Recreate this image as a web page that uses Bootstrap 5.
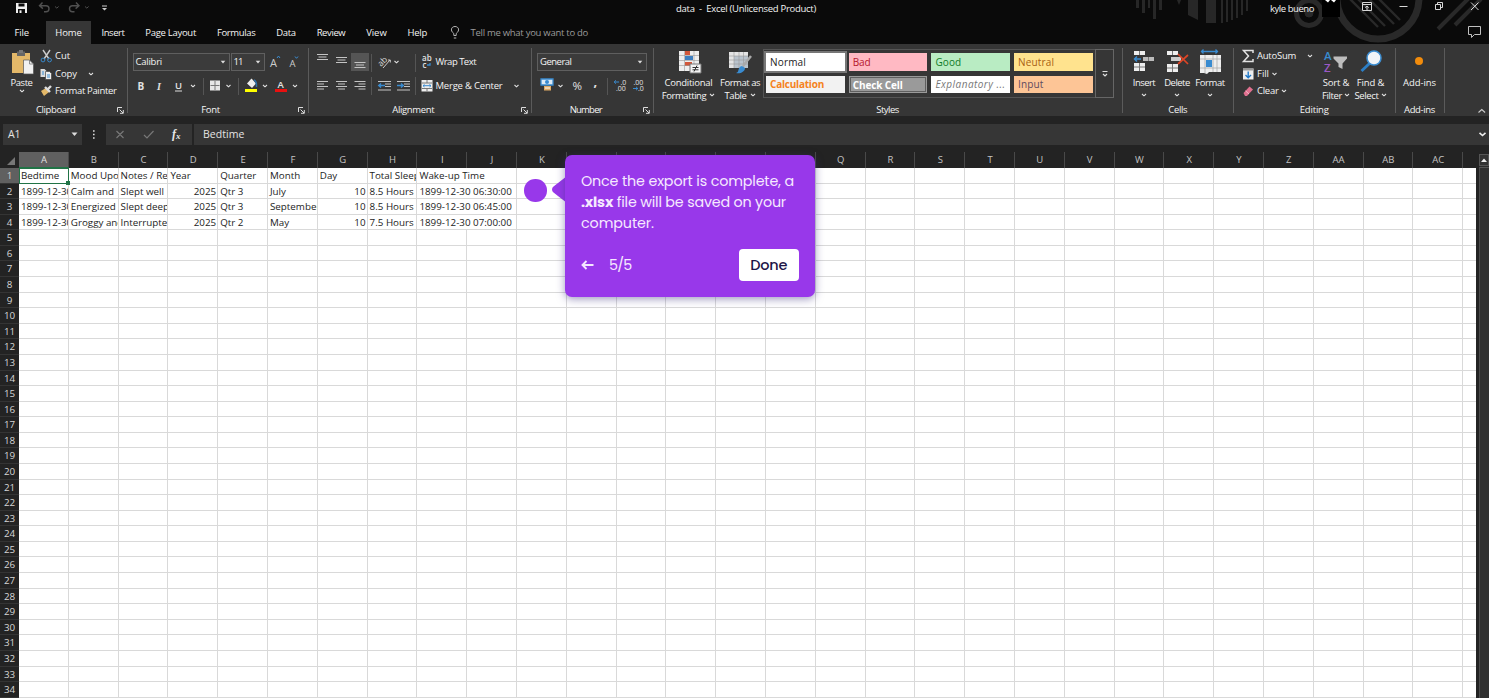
<!DOCTYPE html>
<html lang="en">
<head>
<meta charset="utf-8">
<title>data - Excel</title>
<link rel="stylesheet" href="https://cdn.jsdelivr.net/npm/bootstrap@5.3.0/dist/css/bootstrap.min.css">
<style>
body{font-family:"Open Sans","Noto Sans",sans-serif;font-size:9.5px;line-height:12px;background:#232323;color:#f4f4f4;overflow:hidden;height:698px}
svg{display:block;flex:none;overflow:visible}
svg text{font-family:"Open Sans",sans-serif}
[data-w]{display:inline-block;white-space:nowrap;flex:none}
.titlebar{height:21px;background:#0a0a0a}
.tabsrow{height:23px;background:#0a0a0a}
.tabitem{padding:0 10.45px;height:23px;line-height:23px}
.tabitem.first{padding:0 17px 0 14.5px}
.tabitem.current{background:#363636;padding:0 9.3px}
.deco{position:absolute;right:0;top:0;z-index:1}
.above{position:relative;z-index:2}
.caption{padding-left:571px;line-height:17px}
.user{margin-left:454px;line-height:17px}
.tell{color:#9a9a9a;margin-left:9px}
.ribbon{height:72px;background:#363636}
.grp{height:65px;margin-top:4px;position:relative;border-right:1px solid #5b5b5b}
.grpname{height:12px;line-height:12px;position:absolute;left:0;right:0;bottom:-3px}
.launch{position:absolute;right:3px;bottom:-1px}
.grpbody{height:53px;margin-top:-1px}
.r17{height:17.8px}
.r24{height:25px}
.r24.second{margin-top:1px}
.g1{width:127.5px}.g2{width:181px}.g3{width:223.5px}.g4{width:121.5px}.g5{width:469px}.g6{width:111.5px}.g7{width:161.5px}.g8{width:49px}
.big{line-height:13px}
.big .cap{height:13px}
.big svg.ic{margin:2.5px 0 1px}
.paste{width:39px;padding-left:4px}
.box1{border:1px solid #5f5f5f;background:#3b3b3b;height:18px;padding:0 3px 0 2px}
.fontbox{width:97px}.sizebox{width:34px;margin-left:1px}.numbox{width:110px;margin-left:5px}
.gallery{border:1px solid #555;width:333px;height:49px;margin-top:2px;padding:3px 3px 3px 2px;display:grid;grid-template-columns:repeat(4,78.5px);column-gap:4.2px;row-gap:5px;grid-template-rows:18px 17px}
.swatch{padding-left:4px;font-size:10px;line-height:18px;color:#222;overflow:hidden;font-family:"Open Sans"}
.swatch.low{line-height:16px}
.normal{background:#fff;outline:2px solid #777}
.bad{background:#ffb9c3;color:#b5172c}.good{background:#b9ecc3;color:#107b28}.neutral{background:#ffe38e;color:#a85f12}
.calc{background:#f2f2f2;color:#f58220;font-weight:700}.check{background:#9a9a9a;color:#fff;font-weight:700;border:1px solid #9a9a9a;outline:1px solid #5f5f5f;outline-offset:-2px;line-height:14px;padding-left:3px}
.expl{background:#fff;color:#777;font-style:italic}.inputs{background:#fdc596;color:#5e4a60}
.gallmore{border:1px solid #666;width:19px;height:49px;margin-top:2px}
.fbar{height:21px;margin-top:8px;font-size:10.5px;color:#e4e4e4}
.fbar>div{background:#363636;height:21px;line-height:21px}
.namebox{width:79px;margin-left:3px;padding:0 4px 0 5px}
.fxbox{width:86px;margin-left:24px;position:relative}
.sheet{margin-top:7px;height:546px}
.gridarea{width:1476px;overflow:hidden;background:#fff;flex:none}
.line{display:flex;height:15.58px}
.heads{height:16px;background:#232323;color:#c4c4c4;font-size:9.5px;line-height:16px}
.corner{width:19px;flex:none;padding:4px 3px 2px 7px}
.hd{width:49.81px;flex:none;text-align:center;border-right:1px solid #494949;padding-left:1px}
.hd.on{background:#606060;color:#e2e2e2;border-bottom:1px solid #217346}
.num{width:19px;flex:none;background:#232323;color:#d6d6d6;text-align:center;font-size:9.8px;line-height:16px;border-bottom:1px solid #343434}
.num.on{background:#606060}
.cel{width:49.81px;flex:none;border-right:1px solid #d9d9d9;border-bottom:1px solid #d9d9d9;color:#1c1c1c;font-size:9.8px;line-height:16px;white-space:nowrap;overflow:hidden;padding:0 1px 0 2px}
.cel.two{width:99.62px}
.cel.rt{text-align:right}
.picked{position:relative;outline:1.5px solid #217346;outline-offset:-1px;z-index:1;overflow:visible}
.picked::after{content:"";position:absolute;right:-2px;bottom:-2px;width:4px;height:4px;background:#217346}
.scroller{width:10px;margin-left:3px;background:#2c2c2c;margin-top:2px}
.scroller .upbox{height:12px;border:1px solid #555;background:#333}
.scroller .track{height:532px;border-left:1px solid #4b4b4b;border-top:1px solid #555;margin-top:1px;background:#303030}
.tour{position:absolute;left:524px;top:155px;z-index:3;font-family:"Poppins","Inter",sans-serif}
.tourdot{width:22.5px;height:22.5px;border-radius:50%;background:#9838ea;margin-top:24px}
.tourbox{width:250px;height:142px;border-radius:7px;background:#9838ea;color:#f6e9ff;padding:16px;font-size:14.3px;line-height:21px;box-shadow:0 2px 9px rgba(60,50,130,.5)}
.donebtn{width:60.5px;height:32px;background:#fff;border-radius:4px;color:#1d1547;line-height:32px;font-size:14.5px;font-weight:500}
</style>
</head>
<body>
<svg width="0" height="0" class="position-absolute"><defs>
<symbol id="chev" viewBox="0 0 6 4"><path d="M1 1l2 1.8L5 1" fill="none" stroke="#e0e0e0" stroke-width="1.1"/></symbol>
<symbol id="tri" viewBox="0 0 6 4"><path d="M.7.8h4.6L3 3.4z" fill="#ddd"/></symbol>
<symbol id="lau" viewBox="0 0 7 7"><path d="M.5 5V.5H5M2.5 2.5L6 6M6.3 3v3.3H3" fill="none" stroke="#ddd" stroke-width="1"/></symbol>
</defs></svg>

<svg class="deco" width="360" height="44"><g fill="#272727">
<path d="M7 0h3v8H7zM13 0h3v13h-3zM19 0h2v8h-2zM24 0h3v19h-3zM30 0h3v10h-3zM48 0h4l-2 5zM59 0h10v20l-10-5zM77 0h10v23H77zM92 0h2v23h-2zM97 0h2v22h-2zM102 0h2v20h-2zM107 0h2v18h-2zM112 0h2v15h-2zM117 0h2v11h-2z"/></g>
<g fill="none" stroke="#292929"><circle cx="180" cy="13" r="12.500" stroke-width="5"/><circle cx="180" cy="13" r="4" fill="#292929"/><circle cx="249" cy="-2" r="41" stroke-width="7"/><path d="M220-2l29 29M228-2l28 28M237-4l28 28M246-5l25 25" stroke-width="2.400"/><path d="M309 29L342-4M326 25L352-1" stroke-width="4"/></g></svg>

<div class="titlebar d-flex">
 <svg width="105" height="21"><path d="M16 3h11v10H16z" fill="#eee"/><path d="M18.500 3.500h6v3h-6zM18 9h7v4h-7z" fill="#0a0a0a"/><path d="M19.500 10.300h2V13h-2z" fill="#eee"/>
 <g fill="none" stroke="#505050" stroke-width="1.400"><path d="M42.500 2.500L39.500 5.700l3.400 2.900M40 5.700h6c4 0 4 6 0 6h-2M76 2.500l3 3.200-3.400 2.900M78.500 5.700h-6c-4 0-4 6 0 6h2"/><path d="M55 6.500l1.800 1.600L58.600 6.500M85 6.500l1.800 1.600L88.600 6.500" stroke-width="1"/></g>
 <path d="M102 5.500h5v1h-5zM102 8h5l-2.500 2.600z" fill="#ccc"/></svg>
 <div class="caption"><span data-w="140">data &nbsp;-&nbsp; Excel (Unlicensed Product)</span></div>
 <div class="user above"><span data-w="44">kyle bueno</span></div>
 <svg width="175" height="21" class="above"><path d="M8 0h18v17H8z" fill="#000"/><path d="M11 0h5l-2 2.500zM17 0h5l-2 2.500z" fill="#fff"/>
 <g fill="none" stroke="#d8d8d8"><path d="M48.500 2.500h9v8h-9zM48.500 4.500h9M53 10V6M51.200 7.600L53 6l1.800 1.600"/><path d="M85.500 6.500h8M121.500 4.500h5v5h-5zM123.500 4V2.500h5v5H127M157 2.500l7.500 7.500M164.500 2.500L157 10"/></g></svg>
</div>

<div class="tabsrow d-flex">
 <div class="tabitem first"><span data-w="14.500">File</span></div>
 <div class="tabitem current"><span data-w="26.500">Home</span></div>
 <div class="tabitem"><span data-w="22.800">Insert</span></div>
 <div class="tabitem"><span data-w="50.800">Page Layout</span></div>
 <div class="tabitem"><span data-w="38.500">Formulas</span></div>
 <div class="tabitem"><span data-w="19.500">Data</span></div>
 <div class="tabitem"><span data-w="28.700">Review</span></div>
 <div class="tabitem"><span data-w="20.500">View</span></div>
 <div class="tabitem"><span data-w="19.500">Help</span></div>
 <svg width="24" height="23"><g fill="none" stroke="#b5b5b5"><path d="M15.800 14.500v-2c-4-3-2.500-7 1.200-7s5.200 4 1.200 7v2zM15.800 17h2.500"/></g></svg>
 <div class="tabitem px-0 tell"><span data-w="117.500">Tell me what you want to do</span></div>
 <svg class="ms-auto above" width="22" height="23"><path d="M1.500 5.500h12v8h-6l-3 3v-3h-3z" fill="none" stroke="#c0c0c0"/></svg>
</div>

<div class="ribbon d-flex above">
 <div class="grp g1 d-flex flex-column">
  <div class="grpbody d-flex">
   <div class="paste big d-flex flex-column align-items-center"><svg class="ic" width="24" height="25"><path d="M2 3h18v20H2z" fill="#e3b869"/><path d="M7 1.500h8V6H7z" fill="#666"/><path d="M9 0h4v3H9z" fill="#777"/><path d="M13.500 10h6l4 4v10h-10z" fill="#f1f1f1" stroke="#555" stroke-width=".7"/><path d="M19.500 10v4h4" fill="none" stroke="#777" stroke-width=".8"/></svg><div class="cap"><span data-w="22">Paste</span></div><svg width="6" height="4"><use href="#chev"/></svg></div>
   <div>
    <div class="r17 d-flex align-items-center"><svg width="16" height="14"><path d="M4 1l6 9M11 1L5 10" stroke="#ccc" stroke-width="1.400"/><circle cx="4" cy="11" r="1.900" fill="none" stroke="#3687c8"/><circle cx="10.500" cy="11" r="1.900" fill="none" stroke="#3687c8"/></svg><span data-w="15">Cut</span></div>
    <div class="r17 d-flex align-items-center"><svg width="16" height="12"><path d="M1.500 1h4l2 2v6h-6z" fill="#ddd"/><path d="M6.500 3.500h4l2 2v6h-6z" fill="#eee" stroke="#444" stroke-width=".7"/><path d="M3 4h2M3 6h2M8 7h3M8 9h3" stroke="#398bd0"/></svg><span data-w="22">Copy</span><svg width="20" height="4"><use href="#chev" x="11" width="6" height="4"/></svg></div>
    <div class="r17 d-flex align-items-center"><svg width="16" height="12"><path d="M2 6l5-3 3 4-5 4z" fill="#e3b869"/><path d="M6 2l5 5M9 4l3-3" stroke="#ddd" stroke-width="2.400"/></svg><span data-w="61.500">Format Painter</span></div>
   </div>
  </div>
  <div class="grpname d-flex justify-content-center" style="padding-right:15px"><span data-w="39.500">Clipboard</span></div>
  <svg class="launch" width="7" height="7"><use href="#lau"/></svg>
 </div>

 <div class="grp g2 d-flex flex-column">
  <div class="grpbody ps-1"><div class="ps-1" style="margin-left:-3px">
   <div class="r24 d-flex align-items-center pt-1"><div class="box1 fontbox d-flex align-items-center justify-content-between"><span data-w="26.500">Calibri</span><svg width="6" height="4"><use href="#tri"/></svg></div><div class="box1 sizebox d-flex align-items-center justify-content-between"><span data-w="9">11</span><svg width="6" height="4"><use href="#tri"/></svg></div>
   <svg width="36" height="14"><g fill="#ccc"><text x="5" y="11.500" font-size="11">A</text><text x="24.500" y="11.500" font-size="9.500">A</text></g><path d="M12 3l1.500-2L15 3M30 1.500l1.500 1.800L33 1.500" fill="none" stroke="#3b8dd2"/></svg></div>
   <svg width="170" height="26" style="margin-top:2px"><g fill="#e2e2e2" font-size="10"><text x="4.500" y="15.500" font-weight="700">B</text><text x="24" y="15.500" font-style="italic" style="font-family:'Liberation Serif'" font-weight="700">I</text><text x="42" y="15" font-size="9.500" font-weight="600">U</text><text x="144.500" y="14" font-size="9.500" font-weight="600">A</text></g>
   <path d="M42 17h7" stroke="#ddd"/><path d="M70.500 4v17M105.500 4v17" stroke="#555"/><path d="M77 6.500h10v10H77z" fill="#e6e6e6"/><path d="M82 7v9M77.500 11.500h9" stroke="#777"/>
   <path d="M114 9.500l4.500-5 4.500 5-4 4.500z" fill="#eee"/><path d="M121 6c2.500 1 2.500 3 2.500 7" fill="none" stroke="#2c6da5" stroke-width="1.500"/><path d="M112 15h12v3h-12z" fill="#ff0"/><path d="M142 15h12v3h-12z" fill="#e81010"/>
   <use href="#chev" x="57" y="10" width="6" height="4"/><use href="#chev" x="92.500" y="10" width="6" height="4"/><use href="#chev" x="129" y="10" width="6" height="4"/><use href="#chev" x="159" y="10" width="6" height="4"/></svg></div>
  </div>
  <div class="grpname text-center" style="padding-right:14px"><span data-w="18.500">Font</span></div>
  <svg class="launch" width="7" height="7"><use href="#lau"/></svg>
 </div>

 <div class="grp g3 d-flex flex-column">
  <div class="grpbody">
   <div class="r24 d-flex align-items-center pt-1"><svg width="127" height="24"><path d="M42 3h18v18H42z" fill="#555"/><path d="M8 4.500h11M9.500 7h8M8 9.500h11M27 7.500h11M28.500 10h8M27 12.500h11M45.500 12.500h11M47 15h8M45.500 17.500h11" stroke="#c4c4c4"/><path d="M62.500 4v18M106.500 4v18" stroke="#555"/><text x="68" y="14.500" font-size="8.500" fill="#ddd" transform="rotate(-45 73 11)">ab</text><path d="M74 18l7-8M79 10h2.300v2.500" fill="none" stroke="#ccc"/><use href="#chev" x="84.500" y="10" width="6" height="4"/><g fill="#e3e3e3" font-size="8" font-weight="600"><text x="113" y="11">ab</text><text x="113.500" y="17.500">c</text></g><path d="M121 13v2h-3" fill="none" stroke="#398bd0" stroke-width="1.300"/></svg><span data-w="40.500">Wrap Text</span></div>
   <div class="r24 second d-flex align-items-center"><svg width="127" height="24"><path d="M8 7.500h11M8 10h7M8 12.500h11M8 15h7M27 7.500h11M29 10h7M27 12.500h11M29 15h7M45.500 7.500h11M49.500 10h7M45.500 12.500h11M49.500 15h7M69 7.500h13M76 10h6M76 12.500h6M69 16h13M88 7.500h13M95 10h6M95 12.500h6M88 16h13" stroke="#c4c4c4"/><path d="M70 11.500h6M72 9.500l-2.200 2 2.200 2M88 11.500h6M92 9.500l2.200 2-2.200 2" stroke="#398bd0" stroke-width="1.500" fill="none"/><path d="M62.500 3v18M106.500 3v18" stroke="#555"/><path d="M112.500 6h11v11.500h-11z" fill="#eee"/><path d="M113 9h10M113 14.500h10M118 6v3M118 14.500v3" stroke="#777"/><path d="M114 11.700h8M115.500 10.500l-1.500 1.200 1.500 1.200M120.500 10.500l1.500 1.200-1.500 1.200" stroke="#398bd0" fill="none"/></svg><span data-w="67">Merge &amp; Center</span><svg width="20" height="4"><use href="#chev" x="10.500" width="6" height="4"/></svg></div>
  </div>
  <div class="grpname text-center" style="padding-right:13px"><span data-w="42">Alignment</span></div>
  <svg class="launch" width="7" height="7"><use href="#lau"/></svg>
 </div>

 <div class="grp g4 d-flex flex-column">
  <div class="grpbody">
   <div class="r24 d-flex align-items-center pt-1"><div class="box1 numbox d-flex align-items-center justify-content-between"><span data-w="31.500">General</span><svg width="6" height="4"><use href="#tri"/></svg></div></div>
   <svg width="118" height="26" style="margin-top:2px"><path d="M9 5h12v6H9z" fill="#dceaf6" stroke="#398bd0" stroke-width="1.300"/><circle cx="15" cy="8" r="2" fill="#398bd0"/><path d="M12 12h7v4.500h-7z" fill="#e0aa64"/><path d="M13 14h5" stroke="#fff"/><use href="#chev" x="25.500" y="10" width="6" height="4"/><g fill="#e2e2e2"><text x="40.500" y="16" font-size="11.500">%</text><text x="61.500" y="12" font-size="13" font-weight="700">,</text><g font-size="7"><text x="88.500" y="10.500">.0</text><text x="84" y="17">.00</text><text x="101.500" y="10.500">.00</text><text x="106" y="17">.0</text></g></g><path d="M75.500 4v17" stroke="#555"/><path d="M82 8h5M84 6.300l-1.800 1.700L84 9.700M101 14.500h5M104 12.800l1.800 1.700-1.800 1.700" stroke="#398bd0" fill="none"/></svg>
  </div>
  <div class="grpname text-center" style="padding-right:13px"><span data-w="32">Number</span></div>
  <svg class="launch" width="7" height="7"><use href="#lau"/></svg>
 </div>

 <div class="grp g5 d-flex flex-column">
  <div class="grpbody d-flex">
   <div class="big d-flex flex-column align-items-center" style="width:70px"><svg class="ic" width="24" height="25"><path d="M2 1h20v20H2z" fill="#eee"/><path d="M8 1h5v4H8zM8 12h7v4H8z" fill="#d2573a"/><path d="M8 6h8v4H8z" fill="#3e7fc0"/><path d="M2 5.500h20M2 10.500h20M2 15.500h20M7.500 1v20M17 1v20" stroke="#999" stroke-width=".6"/><path d="M13 14h11v9H13z" fill="#f4f4f4" stroke="#777"/><path d="M15.500 17.500h6M15.500 19.800h6M20 15.500l-3 6" stroke="#333"/></svg><div class="cap"><span data-w="48">Conditional</span></div><div class="cap d-flex align-items-center"><span data-w="44.500">Formatting</span><svg width="9" height="4"><use href="#chev" x="3" width="6" height="4"/></svg></div></div>
   <div class="big d-flex flex-column align-items-center" style="width:33px"><svg class="ic" width="24" height="25"><path d="M1 2h19v16H1z" fill="#e4e4e4"/><path d="M6 6h14v12H6z" fill="#b9c3cd"/><path d="M1 6h19M1 10h19M1 14h19M6 2v16M11 2v16M15.500 2v16" stroke="#999" stroke-width=".6"/><path d="M23 6l-8 10" stroke="#aaa" stroke-width="2.500"/><path d="M8 23c4-1 1-6 6-7l3 2c0 4-5 6-9 5z" fill="#398bd0"/></svg><div class="cap"><span data-w="40">Format as</span></div><div class="cap d-flex align-items-center"><span data-w="22">Table</span><svg width="9" height="4"><use href="#chev" x="3" width="6" height="4"/></svg></div></div>
   <div class="gallery" style="margin-left:6.500px"><div class="swatch normal"><span data-w="36">Normal</span></div><div class="swatch bad"><span data-w="18">Bad</span></div><div class="swatch good"><span data-w="26">Good</span></div><div class="swatch neutral"><span data-w="36">Neutral</span></div><div class="swatch low calc"><span data-w="54">Calculation</span></div><div class="swatch low check"><span data-w="50">Check Cell</span></div><div class="swatch low expl"><span data-w="70">Explanatory ...</span></div><div class="swatch low inputs"><span data-w="25.500">Input</span></div></div>
   <div class="gallmore d-flex align-items-center justify-content-center" style="margin-left:-1px"><svg width="6" height="6"><path d="M.5.500h5" stroke="#ddd"/><path d="M1 3l2 2 2-2" fill="none" stroke="#ddd" stroke-width="1.200"/></svg></div>
  </div>
  <div class="grpname text-center"><span data-w="22.500">Styles</span></div>
 </div>

 <div class="grp g6 d-flex flex-column">
  <div class="grpbody d-flex" style="padding-left:5px">
   <div class="big d-flex flex-column align-items-center" style="width:33px"><svg class="ic" width="22" height="25"><path d="M1 1h11v4H1zM1 13h11v8H1z" fill="#eee"/><path d="M10 7h11v4H10z" fill="#bbb"/><path d="M1 17h11M6.500 1v4M6.500 13v8M15.500 7v4" stroke="#777"/><path d="M1 9h7M4 6.500L1.500 9 4 11.500" stroke="#398bd0" stroke-width="1.500" fill="none"/></svg><div class="cap"><span data-w="22.500">Insert</span></div><svg width="6" height="4" class="mt-1"><use href="#chev"/></svg></div>
   <div class="big d-flex flex-column align-items-center" style="width:33px"><svg class="ic" width="22" height="25"><path d="M1 1h11v4H1zM1 14h11v8H1z" fill="#eee"/><path d="M5 7h10v4H5z" fill="#ccc"/><path d="M1 18h11M6.500 1v4M6.500 14v8" stroke="#777"/><path d="M12 4l10 10M22 5L12 14" stroke="#dc4526" stroke-width="1.700"/></svg><div class="cap"><span data-w="25.500">Delete</span></div><svg width="6" height="4" class="mt-1"><use href="#chev"/></svg></div>
   <div class="big d-flex flex-column align-items-center" style="width:33px"><svg class="ic" width="22" height="25"><path d="M1 5h21v17H10l-2 2-3-1H1z" fill="#eee"/><path d="M7 10h6v7H7z" fill="#398bd0"/><path d="M1 9h21M1 18h21M6 5v18M14 5v17M18 5v17" stroke="#aaa" stroke-width=".8"/><path d="M2 1.500h17M4.500-.5L2.500 1.500l2 2M16.500-.5l2 2-2 2" stroke="#398bd0" stroke-width="1.300" fill="none"/></svg><div class="cap"><span data-w="29.500">Format</span></div><svg width="6" height="4" class="mt-1"><use href="#chev"/></svg></div>
  </div>
  <div class="grpname text-center"><span data-w="19">Cells</span></div>
 </div>

 <div class="grp g7 d-flex flex-column">
  <div class="grpbody d-flex">
   <div style="width:85px;padding-left:7px">
    <div class="r17 d-flex align-items-center"><svg width="16" height="14"><path d="M12 4V1.500H2.500L7.500 7l-5 5.500H12V10" fill="none" stroke="#e2e2e2" stroke-width="1.500"/></svg><span data-w="39">AutoSum</span><svg width="20" height="4"><use href="#chev" x="11" width="6" height="4"/></svg></div>
    <div class="r17 d-flex align-items-center"><svg width="16" height="12"><path d="M2 .5h10.500v11H2z" fill="#eee"/><path d="M2 .5h10.500v2H2z" fill="#999"/><path d="M7.200 3.500v6M4.500 7l2.700 2.700L10 7" fill="none" stroke="#1f78c8" stroke-width="1.400"/></svg><span data-w="12">Fill</span><svg width="10" height="4"><use href="#chev" x="2.500" width="6" height="4"/></svg></div>
    <div class="r17 d-flex align-items-center"><svg width="16" height="12"><path d="M2.500 8l6-6.500 3.500 3-6 6.500h-2z" fill="#e0708f"/><path d="M4.500 5.800L8 9" stroke="#f2b6c6"/></svg><span data-w="21.500">Clear</span><svg width="10" height="4"><use href="#chev" x="2" width="6" height="4"/></svg></div>
   </div>
   <div class="big d-flex flex-column align-items-center" style="width:34px"><svg class="ic" width="24" height="25"><text x="0" y="10" font-size="11.500" font-weight="600" fill="#398bd0">A</text><text x="0" y="21.500" font-size="11.500" font-weight="600" fill="#9b59c6">Z</text><path d="M9.500 6.500H23v2l-4.500 5V19l-4-2v-3.500l-5-5z" fill="#bdbdbd"/></svg><div class="cap"><span data-w="26.500">Sort &amp;</span></div><div class="cap d-flex align-items-center"><span data-w="20">Filter</span><svg width="8" height="4"><use href="#chev" x="2" width="6" height="4"/></svg></div></div>
   <div class="big d-flex flex-column align-items-center" style="width:35px"><svg class="ic" width="24" height="25"><path d="M11 13L2.500 21" stroke="#2c7fc6" stroke-width="3"/><circle cx="15" cy="8" r="7" fill="#f1f4f7" stroke="#3c8ed2" stroke-width="1.500"/></svg><div class="cap"><span data-w="27.500">Find &amp;</span></div><div class="cap d-flex align-items-center"><span data-w="24">Select</span><svg width="8" height="4"><use href="#chev" x="2" width="6" height="4"/></svg></div></div>
  </div>
  <div class="grpname text-center"><span data-w="29">Editing</span></div>
 </div>

 <div class="grp g8 d-flex flex-column">
  <div class="grpbody big d-flex flex-column align-items-center"><svg class="ic" width="24" height="25"><circle cx="11" cy="11" r="4" fill="#f28c0c"/></svg><div class="cap"><span data-w="33">Add-ins</span></div></div>
  <div class="grpname text-center"><span data-w="31">Add-ins</span></div>
 </div>
 <svg class="ms-auto align-self-end" width="12" height="12"><path d="M1.500 8.500l3.300-3 3.300 3" fill="none" stroke="#ccc" stroke-width="1.100"/></svg>
</div>

<div class="fbar d-flex">
 <div class="namebox d-flex align-items-center justify-content-between"><span data-w="12.500">A1</span><svg width="7" height="5"><path d="M.5.500h6l-3 3.500z" fill="#ddd"/></svg></div>
 <div class="fxbox"><svg width="86" height="21"><path d="M-13 6.200h1.600v1.600H-13zM-13 9.700h1.600v1.600H-13zM-13 13.200h1.600v1.600H-13z" fill="#ddd"/><path d="M10.500 7l7 7M17.500 7l-7 7M38 11l3 3 6.500-7" fill="none" stroke="#777" stroke-width="1.200"/><text x="66" y="14" font-size="12" font-weight="700" font-style="italic" fill="#e8e8e8" style="font-family:'Liberation Serif'">f<tspan font-size="9" dy="1">x</tspan></text></svg></div>
 <div class="flex-grow-1 d-flex align-items-center justify-content-between" style="margin-left:2px;padding:0 3px 0 9px"><span data-w="41.500">Bedtime</span><svg width="7" height="5"><path d="M.5.800l3 2.700L6.500.800" fill="none" stroke="#eee" stroke-width="1.600"/></svg></div>
</div>

<div class="sheet d-flex">
 <div class="gridarea" id="grid"></div>
 <div class="scroller"><div class="upbox d-flex align-items-center justify-content-center"><svg width="6" height="4"><path d="M0 4h6L3 .5z" fill="#eee"/></svg></div><div class="track"></div></div>
</div>

<div class="tour d-flex">
 <div class="tourdot"></div>
 <svg width="18.500" height="60"><path d="M20 21L6.500 31.500c-2 1.500-2 4.500 0 6L20 48z" fill="#9838ea"/></svg>
 <div class="tourbox d-flex flex-column justify-content-between">
  <div><span data-w="213">Once the export is complete, a</span><br><span data-w="205"><b>.xlsx</b> file will be saved on your</span><br><span data-w="73">computer.</span></div>
  <div class="d-flex align-items-center"><svg width="28" height="14"><path d="M12.500 7H1.500M5.500 3L1.500 7l4 4" fill="none" stroke="#f4e6ff" stroke-width="1.900"/></svg><span data-w="22.500">5/5</span><div class="donebtn ms-auto text-center"><span data-w="37">Done</span></div></div>
 </div>
</div>

<script src="https://cdn.jsdelivr.net/npm/bootstrap@5.3.0/dist/js/bootstrap.bundle.min.js"></script>
<script>
const rows = [
 ['Bedtime','Mood Upon','Notes / Ref','Year','Quarter','Month','Day','Total Sleep','Wake-up Time'],
 ['1899-12-30','Calm and','Slept well','2025','Qtr 3','July','10','8.5 Hours','1899-12-30 06:30:00'],
 ['1899-12-30','Energized','Slept deep','2025','Qtr 3','September','10','8.5 Hours','1899-12-30 06:45:00'],
 ['1899-12-30','Groggy and','Interrupted','2025','Qtr 2','May','10','7.5 Hours','1899-12-30 07:00:00']
];
const name = i => i < 26 ? String.fromCharCode(65 + i) : 'A' + String.fromCharCode(39 + i);
let out = '<div class="line heads"><div class="corner"><svg width="9" height="10"><path d="M8 1v8H0z" fill="#777"/></svg></div>';
for (let c = 0; c < 29; c++) out += `<div class="hd${c ? '' : ' on'}">${name(c)}</div>`;
out += '</div>';
for (let r = 0; r < 35; r++) {
  out += `<div class="line"><div class="num${r ? '' : ' on'}">${r + 1}</div>`;
  for (let c = 0; c < 30; c++) {
    const v = rows[r] && rows[r][c] !== undefined ? rows[r][c] : '';
    const wide = r < 4 && c === 8;
    const numeric = v !== '' && !isNaN(v);
    out += `<div class="cel${wide ? ' two' : ''}${numeric ? ' rt' : ''}${!r && !c ? ' picked' : ''}">${v}</div>`;
    if (wide) c++;
  }
  out += '</div>';
}
document.getElementById('grid').innerHTML = out;
// Even out label tracking so each label fills its slot
document.querySelectorAll('[data-w]').forEach(e => {
  const w = +e.dataset.w, n = e.textContent.length;
  e.style.letterSpacing = ((w - e.getBoundingClientRect().width) / n) + 'px';
  e.style.width = w + 'px';
});
</script>
</body>
</html>
